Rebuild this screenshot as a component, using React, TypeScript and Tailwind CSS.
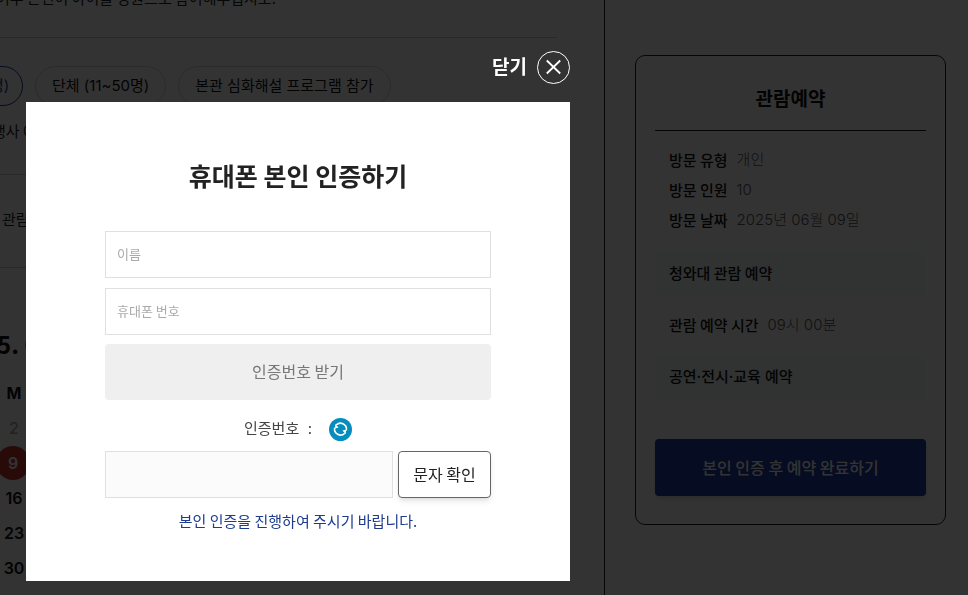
import { useState } from 'react';

const programs = ['단체 (11~50명)', '본관 심화해설 프로그램 참가'];

const mondays = [2, 9, 16, 23, 30];

const visitInfo = [
  { label: '방문 유형', value: '개인' },
  { label: '방문 인원', value: '10' },
  { label: '방문 날짜', value: '2025년 06월 09일' },
];

function InfoRow({ label, value }: { label: string; value: string }) {
  return (
    <div className="flex gap-[9px] px-[14px] text-[15px] leading-[30px]">
      <dt className="font-medium text-[#111]">{label}</dt>
      <dd className="font-['Inter','Noto_Sans_CJK_KR',sans-serif] font-light text-[#555]">{value}</dd>
    </div>
  );
}

function ReservationMain() {
  return (
    <main className="min-w-0 flex-1 overflow-hidden whitespace-nowrap text-[15px] text-[#222]">
      <div className="mr-[47px]">
        <p className="-mt-3.5 -ml-1 border-b border-[#ccc] pb-[27px] leading-6">
          여부 본인이 아이를 정원으로 참여해주십시오.
        </p>

        <div className="-ml-20 flex gap-3 pt-7 font-['Inter','Noto_Sans_CJK_KR',sans-serif] text-[#111]">
          <button className="h-10 w-[103px] rounded-full border border-[#1e3ca5] pr-4 text-right text-[#1e3ca5]">
            개인 (1~10명)
          </button>
          {programs.map((name) => (
            <button key={name} className="h-10 rounded-full border border-[#d5d5d5] px-4">
              {name}
            </button>
          ))}
        </div>

        <p className="-ml-2 border-b border-[#ccc] pt-[13px] pb-[31px] leading-6">행사 예약</p>
        <p className="border-b border-[#ccc] pt-8 pb-9 pl-0.5 leading-6">관람일</p>
      </div>

      <h2 className="-ml-[3px] pt-[60px] text-2xl font-bold leading-8 text-[#111]">5. 06</h2>

      <table className="mt-[15px] w-7 table-fixed text-center font-['Inter',sans-serif] text-[16px] font-semibold text-[#111]">
        <thead>
          <tr className="h-[35px]">
            <th className="font-bold">M</th>
          </tr>
        </thead>
        <tbody>
          {mondays.map((day) => (
            <tr key={day} className="h-[35px]">
              <td>
                {day === 9 ? (
                  <span className="-ml-1 flex size-[34px] items-center justify-center rounded-full bg-[#c8372a] text-white">
                    {day}
                  </span>
                ) : (
                  <span className={day === 2 ? 'font-medium text-[#aaa]' : ''}>{day}</span>
                )}
              </td>
            </tr>
          ))}
        </tbody>
      </table>
    </main>
  );
}

function ReservationSummary() {
  return (
    <aside className="w-[364px] shrink-0 border-l border-[#222] pt-[55px] pr-[22px] pl-[30px]">
      <section className="rounded-[10px] border border-[#222] px-[19px] pb-7">
        <h2 className="border-b border-[#222] pt-7 pb-[18px] text-center text-[19px] font-bold leading-7 text-[#111]">
          관람예약
        </h2>
        <dl className="pt-[14px]">
          {visitInfo.map((row) => (
            <InfoRow key={row.label} {...row} />
          ))}
        </dl>
        <h3 className="mt-[15px] bg-[#f3f9f7] px-[14px] text-[15px] font-medium leading-[46px] text-[#111]">
          청와대 관람 예약
        </h3>
        <dl className="py-[14px]">
          <InfoRow label="관람 예약 시간" value="09시 00분" />
        </dl>
        <h3 className="bg-[#f3f9f7] px-[14px] font-['Inter','Noto_Sans_CJK_KR',sans-serif] text-[15px] font-medium leading-[46px] text-[#111]">
          공연·전시·교육 예약
        </h3>
        <button className="mt-[39px] h-[57px] w-full rounded bg-[#1e3ca5] pb-0.5 text-[16px] font-medium text-white shadow-md">
          본인 인증 후 예약 완료하기
        </button>
      </section>
    </aside>
  );
}

function PhoneVerifyModal() {
  const [name, setName] = useState('');
  const [phone, setPhone] = useState('');
  const [code, setCode] = useState('');

  const inputClass =
    'h-[47px] w-full border border-[#e0e0e0] bg-white px-[11px] pb-0.5 text-[13px] text-[#222] placeholder:text-[#aaa]';

  return (
    <div className="fixed inset-0 overflow-auto bg-black/80 pt-[51px] pr-[398px] pl-[26px]">
      <div className="flex justify-end pb-[18px]">
        <button className="flex items-center gap-2.5 font-['Inter','Noto_Sans_CJK_KR',sans-serif] text-[19px] font-bold leading-[33px] text-white">
          닫기
          <svg className="size-[33px]" viewBox="0 0 33 33" fill="none" stroke="white">
            <circle cx="16.5" cy="16.5" r="16" />
            <path d="M9.8 9.5l13.4 13M23.2 9.5l-13.4 13" strokeWidth="1.8" />
          </svg>
        </button>
      </div>

      <div role="dialog" aria-labelledby="verify-title" className="bg-white px-[79px] pt-[55px] pb-[46px]">
        <h1 id="verify-title" className="mb-[38px] text-center text-[25px] font-bold leading-9 text-[#222]">
          휴대폰 본인 인증하기
        </h1>

        <div className="flex flex-col gap-2.5">
          <input
            type="text"
            aria-label="이름"
            placeholder="이름"
            value={name}
            onChange={(e) => setName(e.target.value)}
            className={inputClass}
          />
          <input
            type="tel"
            aria-label="휴대폰 번호"
            placeholder="휴대폰 번호"
            value={phone}
            onChange={(e) => setPhone(e.target.value)}
            className={inputClass}
          />
        </div>
        <button className="mt-[9px] h-14 w-full rounded bg-[#efefef] pb-0.5 text-[16px] text-[#777]">
          인증번호 받기
        </button>

        <div className="flex h-[51px] items-center justify-center pt-2 font-['Inter','Noto_Sans_CJK_KR',sans-serif] text-[15px] text-[#444]">
          <label htmlFor="code">인증번호&nbsp; :</label>
          <button aria-label="새로고침" className="ml-[17px]">
            <svg className="size-[23px]" viewBox="0 0 23 23" fill="none">
              <circle cx="11.5" cy="11.5" r="11.5" fill="#058dbd" />
              <g stroke="white" strokeWidth="1.6">
                <path d="M7.2 7A6 6 0 0 1 17.3 12.6" />
                <path d="M15.8 15.2A6 6 0 0 1 5.7 9.6" />
              </g>
              <path d="M6.2 6l3.4 3.6l-3.6 .8zM16.8 16.2l-3.4-3.6l3.6-.8z" fill="white" />
            </svg>
          </button>
        </div>

        <div className="flex gap-[5px]">
          <input
            id="code"
            type="text"
            value={code}
            onChange={(e) => setCode(e.target.value)}
            className="h-[47px] min-w-0 flex-1 border border-[#e0e0e0] bg-[#fbfbfb] px-[11px] text-[13px]"
          />
          <button className="h-[47px] w-[93px] rounded border border-[#666] bg-white pb-0.5 text-[16px] text-[#222] shadow-md">
            문자 확인
          </button>
        </div>
        <p className="mt-[9px] text-center text-[15px] leading-7 text-[#1d3c8f]">
          본인 인증을 진행하여 주시기 바랍니다.
        </p>
      </div>
    </div>
  );
}

export default function App() {
  return (
    <div className="flex h-screen overflow-hidden bg-white font-['Noto_Sans_CJK_KR',sans-serif]">
      <ReservationMain />
      <ReservationSummary />
      <PhoneVerifyModal />
    </div>
  );
}
